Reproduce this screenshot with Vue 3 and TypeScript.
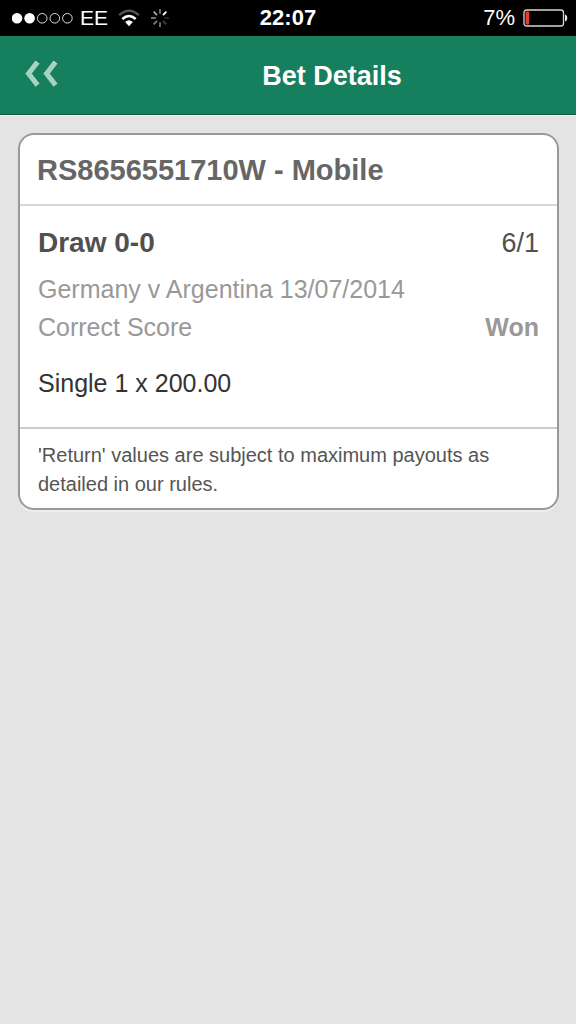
<script setup lang="ts">
interface Bet {
  reference: string
  selection: string
  odds: string
  event: string
  market: string
  result: string
  stake: string
}

const bet: Bet = {
  reference: 'RS8656551710W - Mobile',
  selection: 'Draw 0-0',
  odds: '6/1',
  event: 'Germany v Argentina 13/07/2014',
  market: 'Correct Score',
  result: 'Won',
  stake: 'Single 1 x 200.00',
}

const signalDots: boolean[] = [true, true, false, false, false]
const spokes: number[] = [0.45, 1, 0.15, 0.25, 0.45, 0.5, 0.5, 0.65]
</script>

<template>
  <div class="screen">
    <div class="status">
      <div class="status-side">
        <svg class="signal" width="62" height="14" viewBox="0 0 62 14" aria-hidden="true">
          <circle
            v-for="(on, i) in signalDots"
            :key="i"
            :cx="5 + i * 12.6"
            cy="7.3"
            :r="on ? 5.3 : 4.8"
            :fill="on ? '#fff' : 'none'"
            :stroke="on ? 'none' : '#ddd'"
            stroke-width="1"
          />
        </svg>
        <span>EE</span>
        <svg class="wifi" width="22" height="18" viewBox="0 0 22 18" fill="none" aria-hidden="true">
          <path d="M1.2 6.2Q11-2.6 20.8 6.2" stroke="#555" stroke-width="2.4" />
          <path d="M4.3 10Q11 4 17.7 10" stroke="#fff" stroke-width="2.5" />
          <path d="M7.2 12.9Q11 9.8 14.8 12.9L11 17.2Z" fill="#fff" />
        </svg>
        <svg class="spinner" width="20" height="20" viewBox="0 0 20 20" stroke="#fff" stroke-width="1.8" aria-hidden="true">
          <line
            v-for="(alpha, i) in spokes"
            :key="i"
            x1="10"
            y1="5.8"
            x2="10"
            y2="1"
            :stroke-opacity="alpha"
            :transform="`rotate(${i * 45} 10 10)`"
          />
        </svg>
      </div>
      <span class="clock">22:07</span>
      <div class="status-side right">
        <span>7%</span>
        <svg width="45" height="18" viewBox="0 0 45 18" fill="none" aria-hidden="true">
          <rect x="1" y="1" width="39.5" height="16" rx="2.5" stroke="#d8d8d0" stroke-width="1.3" />
          <rect x="2.6" y="2.6" width="3.6" height="12.8" rx="0.7" fill="#e33c35" />
          <path d="M42 5.5C45 6 45 12 42 12.5Z" fill="#eee" />
        </svg>
      </div>
    </div>

    <header class="bar">
      <button class="back" type="button" aria-label="Back">
        <svg width="34" height="29" viewBox="0 0 34 29" fill="none" aria-hidden="true">
          <g stroke="#0b6145" stroke-width="5.2">
            <path d="M12.8 1.8L3.6 13.8L12.8 25.6" />
            <path d="M30.8 1.8L21.6 13.8L30.8 25.6" />
          </g>
          <g stroke="#a3d3c1" stroke-width="5.2">
            <path d="M12.6 2.8L3.6 14.5L12.6 26.2" />
            <path d="M30.6 2.8L21.6 14.5L30.6 26.2" />
          </g>
        </svg>
      </button>
      <h1>Bet Details</h1>
    </header>

    <main>
      <article class="card">
        <h2>{{ bet.reference }}</h2>
        <section class="details">
          <div class="row selection">
            <h3>{{ bet.selection }}</h3>
            <span>{{ bet.odds }}</span>
          </div>
          <p class="muted">{{ bet.event }}</p>
          <div class="row muted">
            <span>{{ bet.market }}</span>
            <strong>{{ bet.result }}</strong>
          </div>
          <p class="stake">{{ bet.stake }}</p>
        </section>
        <p class="note">'Return' values are subject to maximum payouts as detailed in our rules.</p>
      </article>
    </main>
  </div>
</template>

<style>
body {
  margin: 0;
  background: #e4e4e4;
}
</style>

<style scoped>
.screen {
  min-height: 100vh;
  background: #e4e4e4;
  font-family: "Liberation Sans", Arial, sans-serif;
}
h1,
h2,
h3,
p {
  margin: 0;
}
.status {
  display: flex;
  align-items: center;
  height: 36px;
  padding: 0 8px;
  background: #000;
  color: #fff;
  font-size: 21px;
  line-height: 38px;
}
.status-side {
  flex: 1;
  display: flex;
  align-items: center;
}
.right {
  justify-content: flex-end;
  gap: 8px;
  font-size: 22px;
}
.signal {
  margin: 0 6px 0 4px;
}
.wifi {
  margin: 0 10px;
}
.clock {
  font-size: 22px;
  font-weight: 700;
}
.bar {
  display: flex;
  align-items: center;
  height: 78px;
  border-bottom: 1px solid #0b5b40;
  background: #16805e;
  box-shadow: 0 1px 0 #f2f6f4;
}
.back {
  display: flex;
  align-items: center;
  width: 88px;
  height: 78px;
  padding: 0 0 4px 25px;
  border: 0;
  background: none;
  cursor: pointer;
}
h1 {
  flex: 1;
  padding-top: 2px;
  color: #fff;
  font-size: 27px;
  line-height: 76px;
  text-align: center;
}
main {
  padding: 18px 17px 18px 18px;
}
.card {
  border: 2px solid #999;
  border-radius: 16px;
  background: #fff;
  box-shadow: 0 2px 0 #eee;
}
h2 {
  padding: 2px 17px 0;
  border-bottom: 2px solid #d8d8d8;
  color: #666;
  font-size: 29px;
  line-height: 67px;
}
.details {
  padding: 18px 18px 25px;
  border-bottom: 2px solid #ccc;
}
.row {
  display: flex;
  justify-content: space-between;
}
.selection {
  margin-bottom: 8px;
  color: #505050;
  font-size: 27px;
  line-height: 38px;
}
h3 {
  font-size: 28px;
}
.muted {
  color: #999;
  font-size: 25px;
  line-height: 38px;
}
.stake {
  margin-top: 18px;
  color: #333;
  font-size: 25px;
  line-height: 38px;
}
.note {
  padding: 12px 18px 9px;
  color: #555;
  font-size: 20px;
  line-height: 29px;
}
</style>
